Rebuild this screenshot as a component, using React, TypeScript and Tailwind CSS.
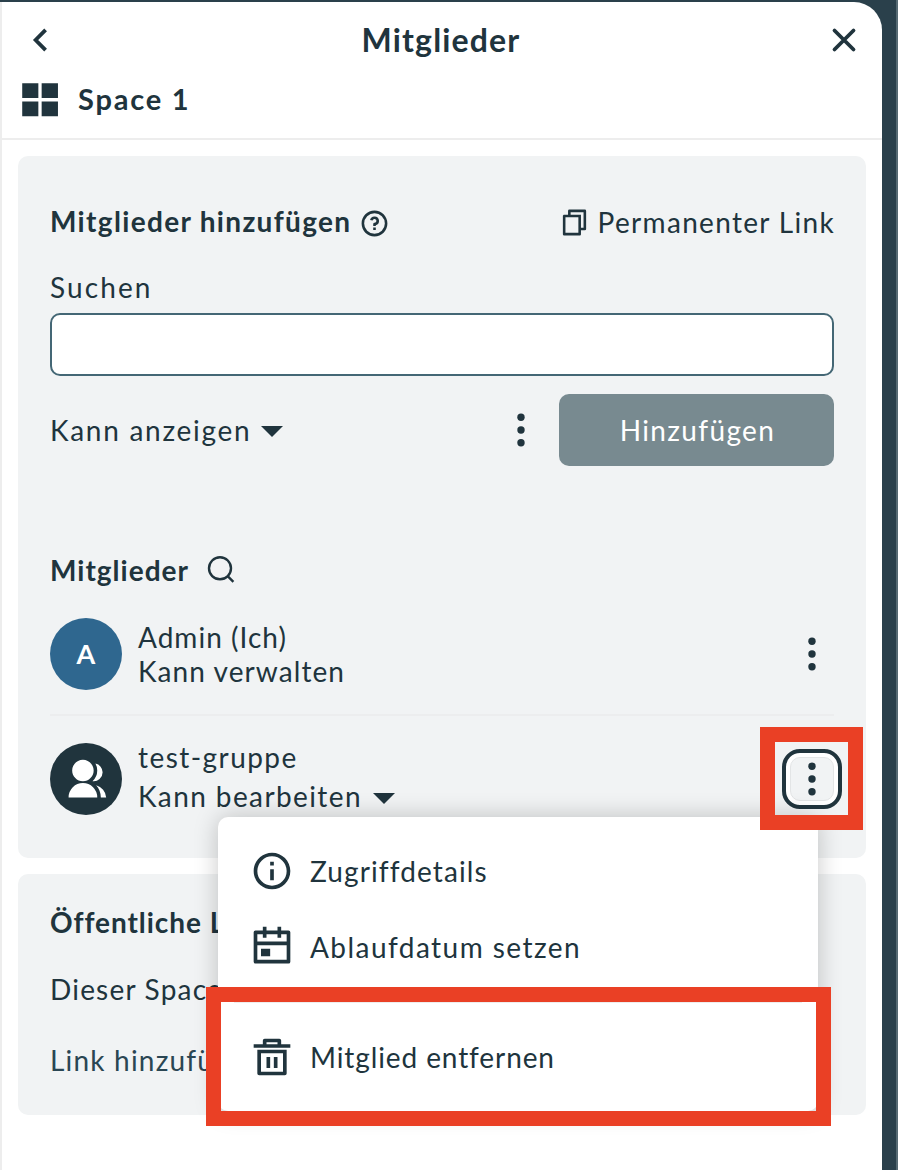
import React from "react";

type IconProps = { d: string; className: string };

const Icon = ({ d, className }: IconProps) => (
  <svg viewBox="0 0 24 24" fill="currentColor" className={`shrink-0 ${className}`} aria-hidden="true">
    <path d={d} />
  </svg>
);

const paths = {
  grid: "M2.3 2.9h8.8v8H2.3zM12.9 2.9h8.9v8h-8.9zM2.3 12.8h8.8v8.1H2.3zM12.9 12.8h8.9v8.1h-8.9z",
  question:
    "M12 22C6.477 22 2 17.523 2 12S6.477 2 12 2s10 4.477 10 10-4.477 10-10 10zm0-2a8 8 0 1 0 0-16 8 8 0 0 0 0 16zm-1-5h2v2h-2v-2zm2-1.645V14h-2v-1.5a1 1 0 0 1 1-1 1.5 1.5 0 1 0-1.471-1.794l-1.962-.393A3.501 3.501 0 1 1 13 13.355z",
  copy: "M7 6V3a1 1 0 0 1 1-1h12a1 1 0 0 1 1 1v14a1 1 0 0 1-1 1h-3v3c0 .552-.45 1-1.007 1H4.007A1.001 1.001 0 0 1 3 21l.003-14c0-.552.45-1 1.007-1H7zM5.003 8L5 20h10V8H5.003zM9 6h8v10h2V4H9v2z",
  group:
    "M2 22a8 8 0 1 1 16 0H2zm8-9c-3.315 0-6-2.685-6-6s2.685-6 6-6 6 2.685 6 6-2.685 6-6 6zm7.363 2.233A7.505 7.505 0 0 1 22.983 22H20c0-2.61-1-4.986-2.637-6.767zm-2.023-2.276A7.98 7.98 0 0 0 18 7a7.964 7.964 0 0 0-1.015-3.903A5 5 0 0 1 21 8a4.999 4.999 0 0 1-5.66 4.957z",
  info: "M12 22C6.477 22 2 17.523 2 12S6.477 2 12 2s10 4.477 10 10-4.477 10-10 10zm0-2a8 8 0 1 0 0-16 8 8 0 0 0 0 16zM11 7h2v2h-2V7zm0 4h2v6h-2v-6z",
  calendar:
    "M17 3h4a1 1 0 0 1 1 1v16a1 1 0 0 1-1 1H3a1 1 0 0 1-1-1V4a1 1 0 0 1 1-1h4V1h2v2h6V1h2v2zm3 8H4v8h16v-8zm0-2V5h-3v2h-2V5H9v2H7V5H4v4h16zM6 13h5v4H6v-4z",
  trash:
    "M4 8h16v13a1 1 0 0 1-1 1H5a1 1 0 0 1-1-1V8zm2 2v10h12V10H6zm3 2h2v6H9v-6zm4 0h2v6h-2v-6zM7 5V3a1 1 0 0 1 1-1h8a1 1 0 0 1 1 1v2h5v2H2V5h5zm2-1v1h6V4H9z",
};

const Dots = () => (
  <svg viewBox="0 0 44 44" fill="currentColor" className="size-11 shrink-0" aria-hidden="true">
    <circle cx="22" cy="9.2" r="3.7" />
    <circle cx="22" cy="22" r="3.7" />
    <circle cx="22" cy="34.8" r="3.7" />
  </svg>
);

const Caret = () => (
  <svg viewBox="0 0 22 11" fill="currentColor" className="mt-[3px] h-[11px] w-[22px] shrink-0" aria-hidden="true">
    <path d="M0 0h22L11 11z" />
  </svg>
);

function Header() {
  return (
    <header className="h-[138px] shrink-0 border-b-2 border-[#ededed]">
      <div className="flex h-[76px] items-center justify-between pl-[18px] pr-[18px]">
        <svg viewBox="0 0 40 40" fill="none" stroke="currentColor" strokeWidth="3.8" className="size-10" aria-label="Zurück">
          <path d="M25.6 9.8 15.6 20l10 10.2" />
        </svg>
        <h1 className="text-[32px] font-bold leading-10 tracking-[1.15px]">Mitglieder</h1>
        <svg viewBox="0 0 40 40" fill="none" stroke="currentColor" strokeWidth="3.8" strokeLinecap="round" className="mr-[2px] size-10" aria-label="Schließen">
          <path d="m12.5 10.5 19 19M31.5 10.5l-19 19" />
        </svg>
      </div>
      <div className="flex h-[42px] items-center pl-[16px]">
        <Icon d={paths.grid} className="mt-[2px] size-11" />
        <span className="ml-[16px] text-[29px] font-bold tracking-[1.8px]">Space 1</span>
      </div>
    </header>
  );
}

function AddMembers() {
  return (
    <section>
      <div className="flex h-9 items-center justify-between">
        <h2 className="flex items-center gap-[7px] font-bold tracking-[1.33px]">
          <span className="-mt-[2px]">Mitglieder hinzufügen</span>
          <Icon d={paths.question} className="mt-[2px] size-[31px]" />
        </h2>
        <button className="-mr-[1px] flex items-center gap-[8px] tracking-[1.32px]">
          <Icon d={paths.copy} className="size-[31px]" />
          <span className="-mt-px">Permanenter Link</span>
        </button>
      </div>
      <label className="mt-[31px] block h-8 leading-8 tracking-[2.1px]" htmlFor="search">
        Suchen
      </label>
      <input id="search" className="mt-[10px] block h-[63px] w-full rounded-[10px] border-2 border-[#446775] bg-white px-3 outline-none" />
      <div className="mt-[18px] flex h-[72px] items-center">
        <button className="flex items-center gap-[10px] tracking-[1.73px]">
          <span className="-mt-px">Kann anzeigen</span>
          <Caret />
        </button>
        <button className="ml-auto mr-4">
          <Dots />
        </button>
        <button className="h-full w-[275px] rounded-[10px] bg-[#788a90] pb-px pl-[2px] tracking-[1.35px] text-white">Hinzufügen</button>
      </div>
    </section>
  );
}

function Members() {
  return (
    <section className="mt-[86px]">
      <h2 className="flex h-9 items-center font-bold tracking-[1.01px]">
        <span className="-mt-px">Mitglieder</span>
        <svg viewBox="0 0 32 32" fill="none" stroke="currentColor" strokeWidth="2.4" className="ml-4 size-8" aria-hidden="true">
          <circle cx="15" cy="14.3" r="11" />
          <path d="m22.4 21.8 6 6" />
        </svg>
      </h2>
      <ul>
        <li className="mt-[30px] flex h-[72px] items-center">
          <span className="flex size-[72px] items-center justify-center rounded-full bg-[#2f678f] text-[27px] font-bold text-white">A</span>
          <div className="ml-4 h-[68px] leading-[34px]">
            <p className="tracking-[1.02px]">Admin (Ich)</p>
            <p className="tracking-[1.08px]">Kann verwalten</p>
          </div>
          <button className="ml-auto">
            <Dots />
          </button>
        </li>
        <li className="mt-6 flex border-t-2 border-[#ecedee] pt-[27px]">
          <span className="flex size-[72px] items-center justify-center rounded-full bg-[#20343d] text-white">
            <Icon d={paths.group} className="size-[43px]" />
          </span>
          <div className="ml-4 -mt-[5px] leading-[39px]">
            <p className="tracking-[1.44px]">test-gruppe</p>
            <p className="flex items-center gap-[11px] tracking-[1.4px]">
              <span>Kann bearbeiten</span>
              <Caret />
            </p>
          </div>
          <button className="mt-[14px] ml-auto size-11 rounded-[10px] border border-[#e3e5e6] bg-[#f1f3f4] outline-4 outline-offset-4 outline-[#20343d] ring-4 ring-white">
            <span className="-m-px block">
              <Dots />
            </span>
          </button>
        </li>
      </ul>
    </section>
  );
}

function ContextMenu() {
  return (
    <div className="absolute left-[218px] top-[817px] w-[600px] rounded-[10px] bg-white py-4 shadow-[0_0_24px_rgba(0,0,0,0.22)]">
      <ul>
        <li className="flex h-[76px] items-center gap-4 pl-8">
          <Icon d={paths.info} className="size-11" />
          <span className="-mt-px tracking-[1.11px]">Zugriffdetails</span>
        </li>
        <li className="flex h-[76px] items-center gap-4 pl-8">
          <Icon d={paths.calendar} className="size-11" />
          <span className="-mt-px tracking-[1.45px]">Ablaufdatum setzen</span>
        </li>
      </ul>
      <hr className="mx-4 mt-4 border-t-2 border-[#ededed]" />
      <ul className="pt-4">
        <li className="flex h-[76px] items-center gap-4 pl-8">
          <Icon d={paths.trash} className="size-11" />
          <span className="-mt-px tracking-[0.9px]">Mitglied entfernen</span>
        </li>
      </ul>
    </div>
  );
}

export default function App() {
  return (
    <div className="relative h-[1170px] w-[898px] overflow-hidden border-r-2 border-[#566a73] bg-[#2a404b] pt-[2px] font-['Lato','Open_Sans',sans-serif] text-[28px] leading-9 text-[#20343d]">
      <aside className="flex h-[1168px] w-[882px] flex-col rounded-tr-[28px] border-l-2 border-[#ededed] bg-white">
        <Header />
        <main className="flex flex-col gap-4 px-4 pt-4">
          <div className="h-[702px] rounded-[10px] bg-[#f1f3f4] px-8 pt-12">
            <AddMembers />
            <Members />
          </div>
          <div className="h-[241px] rounded-[10px] bg-[#f1f3f4] px-8 pt-[30px]">
            <h2 className="whitespace-nowrap font-bold tracking-[0.95px]">Öffentliche Links</h2>
            <p className="mt-[31px] whitespace-nowrap tracking-[1.2px]">Dieser Space</p>
            <button className="mt-[35px] tracking-[1.2px] text-[#2a4653]">Link hinzufügen</button>
          </div>
        </main>
      </aside>
      <ContextMenu />
      <div className="absolute left-[760px] top-[727px] h-[103px] w-[103px] border-[15px] border-[#ea4025]" />
      <div className="absolute left-[206px] top-[987px] h-[139px] w-[625px] border-[15px] border-[#ea4025]" />
    </div>
  );
}
